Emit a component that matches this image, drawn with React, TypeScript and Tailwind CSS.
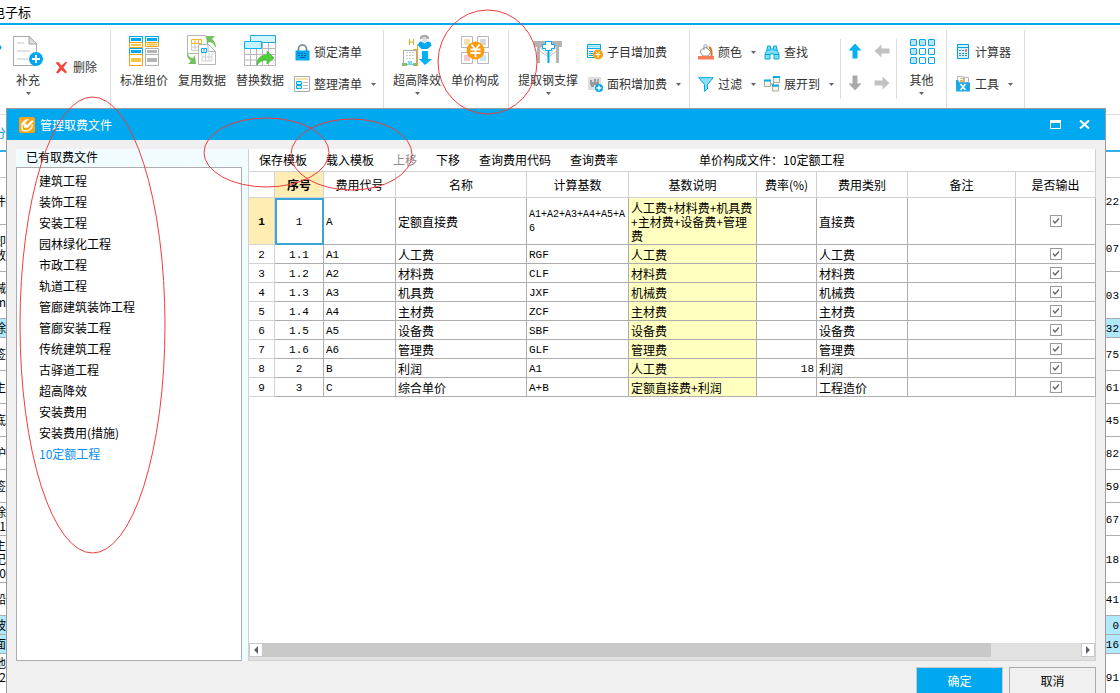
import type { ReactNode } from 'react';

type IconProps = { children: ReactNode; w: number; h: number };

function Svg({ children, w, h }: IconProps) {
  return (
    <svg width={w} height={h} viewBox={`0 0 ${w} ${h}`} fill="none" aria-hidden="true" className="shrink-0">
      {children}
    </svg>
  );
}

function Caret() {
  return (
    <Svg w={5} h={3}>
      <path d="M0 0h5L2.5 3z" fill="#62626e" />
    </Svg>
  );
}

/* ---------- ribbon icons ---------- */

const SupplementIcon = () => (
  <Svg w={30} h={32}>
    <path d="M.5 2.5h16l7 7v22H.5z" fill="#fff" stroke="#a9a9a9" />
    <path d="M16 2.5v7.5h8z" fill="#ddd" stroke="#a9a9a9" />
    <path d="M4 9h7M4 17h13M4 25h11" stroke="#e2e2e2" strokeWidth="2" />
    <circle cx="23" cy="25" r="7" fill="#00a8f0" />
    <path d="M23 21v8M19 25h8" stroke="#fff" strokeWidth="2" />
  </Svg>
);

const DeleteIcon = () => (
  <Svg w={13} h={13}>
    <path d="M.5 1.500l3-.5L6.500 4.500 11 .5l1 1L8.500 6.500 12 11l-1.500 1.500L6.500 9 3 12.500l-2-1L4.500 6.500z" fill="#f2483c" />
  </Svg>
);

const StandardIcon = () => (
  <Svg w={30} h={32}>
    <path d="M.5 14.500h13v6H.5zM.5 2.500h13v6H.5zM16.500 2.500h13v6h-13z" stroke="#00a8f0" />
    <path d="M2 4h10v3H2zM18 4h10v3H18zM2 16h10v3H2z" fill="#00a8f0" />
    <path d="M.5 8.500h13v5H.5zM.5 20.500h13v11H.5zM16.500 8.500h13v4h-13z" stroke="#f5a31a" />
    <path d="M2 10h10v2H2zM18 9.500h10v2H18zM2 24h10v4H2z" fill="#f9c440" />
    <path d="M16.500 14.500h13v6h-13zM16.500 20.500h13v11h-13z" stroke="#b0b0b0" />
    <path d="M18 16h10v3H18zM18 24h10v4H18z" fill="#b5b5b5" />
  </Svg>
);

const ReuseIcon = () => (
  <Svg w={30} h={32}>
    <path d="M.5 1.500h18l2 4v14H.5z" fill="#fff" stroke="#b5b5b5" />
    <path d="M4.500 9.500v7h10M8 10v6M4 13h10" stroke="#d0d0d0" />
    <path d="M4.500 5.500h10v4h-10zM8 5v5M11.500 5v5" fill="#fff" stroke="#f5b52a" />
    <path d="M11.500 10.500h10l7 7v13h-17z" fill="#fff" stroke="#b5b5b5" />
    <path d="M21 10.500v7h7.500" stroke="#b5b5b5" />
    <path d="M15 17v10h10M18.500 19v8M22 19v8M15 23h10M25 20v7" stroke="#d0d0d0" />
    <path d="M14.500 14.500h5v4h-5zM17 14v5" stroke="#00a8f0" />
    <path d="M19 2h9l-3 3c3 3 4 5 4 9-2-4-4-6-7-6l-2 2zM0 17c1 5 3 7 6 7l2-3 1 9H1l3-3c-4-3-5-6-4-10z" fill="#76bf5f" />
  </Svg>
);

const ReplaceIcon = () => (
  <Svg w={32} h={32}>
    <path d="M.5 14v17.500h31V8M.5 20.500h31M.5 26h31M6.500 15v16M12.500 15v16M18.500 9v22M24.500 9v22M19 14.500h12" stroke="#b8b8b8" />
    <path d="M6.500 1.500h25v7h-25z" fill="#d2f4ff" stroke="#20a8d0" />
    <path d="M.5 7.500h17v7H.5z" fill="#c5f2ff" stroke="#00b4f0" />
    <path d="M13 31c0-7 4-10 10-10v-4l7 7-7 6v-4c-4 0-7 1-10 5z" fill="#4fce38" stroke="#35a828" strokeWidth=".6" />
  </Svg>
);

const LockIcon = () => (
  <Svg w={15} h={17}>
    <path d="M3.500 7V5a4 4 0 0 1 8 0v2" stroke="#74808c" strokeWidth="1.600" />
    <path d="M.5 6.500h14v10H.5z" fill="#00a8f0" />
    <path d="M3 9.500h2m1 0h2m1 0h2M3 11.500h2m1 0h2m1 0h2M5 13.500h5" stroke="#07699b" />
  </Svg>
);

const ArrangeIcon = () => (
  <Svg w={16} h={16}>
    <path d="M.5.5h15v15H.5z" fill="#fff" stroke="#aaa" />
    <path d="M2 3h12" stroke="#f6dfa8" strokeWidth="2" />
    <path d="M2.500 5.500h5v3h-5zM2.500 9.500h5v3h-5z" fill="#c7f0ff" stroke="#00a8f0" />
    <path d="M9 6.500h5M9 9.500h5M9 12.500h5" stroke="#bbb" />
  </Svg>
);

const HeightIcon = () => (
  <Svg w={30} h={32}>
    <path d="M1.500 16.500h13v14h-13z" fill="#fff" stroke="#aaa" />
    <path d="M4 18.500h9M4 21.500h9M4 24.500h9" stroke="#ccc" strokeDasharray="2 1" />
    <path d="M0 32v-3h5v3zM11 32v-3h5v3z" fill="#7ac27a" />
    <path d="M6 27h4v4H6z" fill="#7bd7f5" />
    <path d="M15.500 32V10.500h2M15 15.500h-4" stroke="#f5a31a" />
    <path d="M7.500 5v6M11.500 5v6M8 8h4" stroke="#f5a31a" />
    <path d="M18 3c2-3 7-3 9 0v2h-9z" fill="#aaa" />
    <circle cx="22.500" cy="5.500" r="2.500" fill="#ddd" />
    <path d="M17 8.500c2-2 3-1 5.500 1 2.500-2 3.500-3 6-1l1 3-4 3.500h-6L16 11.500z" fill="#00a8f0" />
    <path d="M20 17h6v8h4l-7 6-6-6h3z" fill="#00b0f5" />
  </Svg>
);

const CompositionIcon = () => (
  <Svg w={30} h={30}>
    <path d="M1.500 1.500h11v11h-11zM17.500 1.500h11v11h-11zM1.500 17.500h11v11h-11zM17.500 17.500h11v11h-11z" fill="#fff" stroke="#b8b8b8" />
    <path d="M4 4h6v6H4z" fill="#f5e2b0" />
    <path d="M20 4h6v6h-6z" fill="#d7d7db" />
    <path d="M4 20h6v6H4z" fill="#f3ccd0" />
    <path d="M20 20h6v6h-6z" fill="#cde6f1" />
    <circle cx="15.500" cy="15.500" r="9" fill="#f99d0c" />
    <path d="M11.500 9.500l4 5 4-5M10.500 14.500h10M10.500 18h10M15.500 14v8" stroke="#fff" strokeWidth="1.800" />
  </Svg>
);

const SteelIcon = () => (
  <Svg w={28} h={32}>
    <path d="M0 7h28v6h-3v16h-3V13H6v16H3V13H0z" fill="#b4b4b4" />
    <path d="M6 13l8.500 8 8-8M6 17l8.500 6 8-6" stroke="#c4c4c4" />
    <path d="M11.500 7.500h6v3h3v4h-3v2h-6v-2h-3v-4h3z" fill="#fff" stroke="#00a8f0" />
    <path d="M14.500 17v12" stroke="#00a8f0" strokeWidth="2" />
  </Svg>
);

const SubItemIcon = () => (
  <Svg w={16} h={16}>
    <path d="M.5.5h13v13H.5z" fill="#fff" stroke="#00a0d8" />
    <path d="M1 2.500h12" stroke="#8fdcf8" strokeWidth="2" />
    <path d="M0 4.500h14M2 7.500h4M2 9.500h4M7 7.500h5M2 11.500h4" stroke="#00a8f0" />
    <circle cx="11" cy="10.500" r="5" fill="#f99d0c" />
    <path d="M9 7.500l2 2.500 2-2.500M8.500 10.500h5M11 10v4" stroke="#fff" />
  </Svg>
);

const AreaIcon = () => (
  <Svg w={16} h={16}>
    <path d="M1 1h13v13H1z" fill="#dedede" />
    <path d="M3 4h2v2h2V3h2v3h3v2h-1v3H9V9H7v2H4V9H3z" fill="#999" />
    <path d="M10 3h2v3h-2z" fill="#aaa" />
    <circle cx="12" cy="12" r="4" fill="#00a8f0" />
    <path d="M12 9.500v5M9.500 12h5" stroke="#fff" strokeWidth="1.400" />
  </Svg>
);

const ColorIcon = () => (
  <Svg w={16} h={16}>
    <path d="M3 6l5-3 5 5-3 4H5L2 8z" fill="#fff" stroke="#929292" />
    <path d="M6 6V2c0-2 3-2 3 0v3" stroke="#929292" />
    <path d="M11 3c2 1 3 4 2.500 9" stroke="#d77b21" strokeWidth="2" />
    <path d="M0 12h16v3.500H0z" fill="#fb7d58" />
  </Svg>
);

const FilterIcon = () => (
  <Svg w={16} h={15}>
    <path d="M.7.700h14.500L9.500 7.500v4.500l-3 2.300V7.500z" fill="#90dff8" stroke="#00a8e0" />
  </Svg>
);

const FindIcon = () => (
  <Svg w={16} h={15}>
    <path d="M3.500 1h3v3h3V1h3l.5 4 2 4v5h-5V9h-4v5H1V9l2-4z" fill="#7fdcf6" stroke="#00a8e0" />
    <path d="M3 5h3.500M9.500 5H13M1 9.500h5M10 9.500h5" stroke="#00a8e0" />
  </Svg>
);

const ExpandIcon = () => (
  <Svg w={16} h={16}>
    <path d="M6 8h3M9.500 3v10M10 3.500h-1" stroke="#888" />
    <path d="M.5 4.500h6v6h-6zM9.500 1.500h6v5h-6zM8.500 10h6v5h-6z" fill="#f3f3f0" stroke="#b0a898" />
    <path d="M0 4.500h7M9 1h7M8 9.500h7" stroke="#00b0e8" strokeWidth="2" />
  </Svg>
);

const GridIcon = () => (
  <Svg w={26} h={28}>
    {[0, 1, 2].map((r) =>
      [0, 1, 2].map((c) => (
        <rect
          key={`${r}-${c}`}
          x={1.5 + c * 9}
          y={3.5 + r * 9}
          width="6"
          height="6"
          rx=".5"
          fill={r === 0 || c === 0 ? '#bde2f6' : '#fff'}
          stroke="#00a8e8"
        />
      )),
    )}
  </Svg>
);

const CalculatorIcon = () => (
  <Svg w={14} h={16}>
    <path d="M1.500.5h11v14h-11z" fill="#d6f1fa" stroke="#00a0d8" />
    <path d="M1 3.500h12" stroke="#00a8e0" />
    <path d="M3 6.500h5M3 9.500h8M3 11.500h8" stroke="#3a8fb0" strokeDasharray="2 1" />
    <path d="M9 5.500h2v2H9z" fill="#ef5350" />
  </Svg>
);

const ToolsIcon = () => (
  <Svg w={14} h={16}>
    <path d="M1.500.5h6v6h-6zM8.500 1.500h4v5h-4z" fill="#fff" stroke="#b5b5b5" />
    <path d="M4 2h3v1H4zM4 4h3v2H4z" fill="#f5b52a" />
    <path d="M0 4h2l1.500 2.500H14v9H0z" fill="#1ea8e6" />
    <path d="M4.500 8l5 6M9.500 8l-5 6" stroke="#fff" strokeWidth="1.500" />
  </Svg>
);

const arrowTurns = {
  up: 0,
  right: 90,
  down: 180,
  left: 270,
};

function ArrowIcon({ dir, color }: { dir: keyof typeof arrowTurns; color: string }) {
  return (
    <Svg w={16} h={16}>
      <path d="M8 .5l6.500 7H10.500v8h-5v-8H1.500z" fill={color} transform={`rotate(${arrowTurns[dir]} 8 8)`} />
    </Svg>
  );
}

/* ---------- ribbon building blocks ---------- */

function BigButton({ icon, label, caret = false }: { icon: ReactNode; label: string; caret?: boolean }) {
  return (
    <button type="button" className="flex shrink-0 flex-col items-center pt-[9px]">
      <span className="flex h-8 items-center">{icon}</span>
      <span className="mt-1.5 h-4 leading-4">{label}</span>
      {caret && (
        <span className="mt-1 flex">
          <Caret />
        </span>
      )}
    </button>
  );
}

function SmallButton({ icon, label, caret = false }: { icon: ReactNode; label: string; caret?: boolean }) {
  return (
    <button type="button" className="flex h-8 w-full items-center">
      <span className="mr-1 flex w-4 justify-center">{icon}</span>
      <span>{label}</span>
      {caret && (
        <span className="ml-auto flex">
          <Caret />
        </span>
      )}
    </button>
  );
}

function Divider({ short = false }: { short?: boolean }) {
  return <div className={short ? 'mt-[14px] h-[60px] w-px shrink-0 bg-[#dcdcdc]' : 'mt-[5px] w-px shrink-0 bg-[#dcdcdc]'} />;
}

function Ribbon() {
  return (
    <div className="flex h-[90px] shrink-0 overflow-hidden border-b border-[#dcdcdc] bg-white whitespace-nowrap text-[#333]">
      <div className="flex w-[110px] shrink-0 items-start">
        <span className="flex w-[13px] pt-5">
          <Svg w={2} h={5}>
            <circle cx="-1" cy="2.500" r="2.500" fill="#00a8f0" />
          </Svg>
        </span>
        <BigButton icon={<SupplementIcon />} label="补充" caret />
        <button type="button" className="mt-[26px] ml-3 flex h-8 items-center gap-[5px]">
          <DeleteIcon />
          删除
        </button>
      </div>
      <Divider />
      <div className="flex w-[272px] shrink-0 items-start gap-[10px] pl-[9px]">
        <BigButton icon={<StandardIcon />} label="标准组价" />
        <BigButton icon={<ReuseIcon />} label="复用数据" />
        <BigButton icon={<ReplaceIcon />} label="替换数据" />
        <div className="w-[82px] pt-[11px]">
          <SmallButton icon={<LockIcon />} label="锁定清单" />
          <SmallButton icon={<ArrangeIcon />} label="整理清单" caret />
        </div>
      </div>
      <Divider />
      <div className="flex w-[124px] shrink-0 items-start gap-[10px] pl-[9px]">
        <BigButton icon={<HeightIcon />} label="超高降效" caret />
        <BigButton icon={<CompositionIcon />} label="单价构成" />
      </div>
      <Divider />
      <div className="flex w-[180px] shrink-0 items-start gap-[9px] pl-[9px]">
        <BigButton icon={<SteelIcon />} label="提取钢支撑" caret />
        <div className="w-[94px] pt-[11px]">
          <SmallButton icon={<SubItemIcon />} label="子目增加费" />
          <SmallButton icon={<AreaIcon />} label="面积增加费" caret />
        </div>
      </div>
      <Divider />
      <div className="flex w-[150px] shrink-0 items-start gap-2 pl-2">
        <div className="w-[58px] pt-[11px]">
          <SmallButton icon={<ColorIcon />} label="颜色" caret />
          <SmallButton icon={<FilterIcon />} label="过滤" caret />
        </div>
        <div className="w-[70px] pt-[11px]">
          <SmallButton icon={<FindIcon />} label="查找" />
          <SmallButton icon={<ExpandIcon />} label="展开到" caret />
        </div>
      </div>
      <Divider short />
      <div className="grid w-[55px] shrink-0 auto-rows-[32px] grid-cols-2 content-start justify-items-center pt-[10px]">
        <button type="button" aria-label="上移一行">
          <ArrowIcon dir="up" color="#00b0f5" />
        </button>
        <button type="button" aria-label="升级">
          <ArrowIcon dir="left" color="#c2c2c2" />
        </button>
        <button type="button" aria-label="下移一行">
          <ArrowIcon dir="down" color="#aaaaaa" />
        </button>
        <button type="button" aria-label="降级">
          <ArrowIcon dir="right" color="#c2c2c2" />
        </button>
      </div>
      <Divider short />
      <div className="flex w-[49px] shrink-0 items-start justify-center">
        <BigButton icon={<GridIcon />} label="其他" caret />
      </div>
      <Divider />
      <div className="w-[77px] shrink-0 pt-[11px] pr-[11px] pl-2">
        <SmallButton icon={<CalculatorIcon />} label="计算器" />
        <SmallButton icon={<ToolsIcon />} label="工具" caret />
      </div>
      <Divider />
    </div>
  );
}

/* ---------- sheet behind the dialog ---------- */

type SheetRow = { left: string[]; right: string; size: 'one' | 'two' | 'three'; active?: boolean };

const sheetRows: SheetRow[] = [
  { left: ['件'], right: '22', size: 'three' },
  { left: ['即', '数'], right: '07', size: 'three' },
  { left: ['械', 'cm'], right: '03', size: 'three' },
  { left: ['除'], right: '32', size: 'one', active: true },
  { left: ['签'], right: '75', size: 'two' },
  { left: ['主'], right: '61', size: 'two' },
  { left: ['底'], right: '45', size: 'two' },
  { left: ['护'], right: '82', size: 'two' },
  { left: ['签'], right: '59', size: 'two' },
  { left: ['除', '01'], right: '67', size: 'two' },
  { left: ['主', '记', '0'], right: '18', size: 'three' },
  { left: ['船'], right: '41', size: 'two' },
  { left: ['坡'], right: '0', size: 'one', active: true },
  { left: ['面'], right: '16', size: 'one', active: true },
  { left: ['地', '2', '。'], right: '91', size: 'three' },
];

const sheetHeights = { one: 'h-[19px]', two: 'h-[33px]', three: 'h-[47px]' };

const mono = "font-['Liberation_Mono','Noto_Sans_CJK_SC',monospace] text-[11px]";
const monoSmall = "font-['Liberation_Mono','Noto_Sans_CJK_SC',monospace] text-[10px]";

function Sheet() {
  return (
    <div className="min-h-0 flex-1 overflow-hidden bg-white">
      <div className="flex h-[37px] items-center border-b-2 border-[#2fb0e6] text-[#0a9ae0]">
        <span className="flex w-1.5 justify-end overflow-hidden">分</span>
      </div>
      <div className="h-[26px] border-b border-[#c8c8c8]" />
      {sheetRows.map((row, i) => (
        <div
          key={i}
          className={`flex items-center justify-between border-b border-[#adadad] leading-[14px] ${sheetHeights[row.size]} ${
            row.active ? 'bg-[#b0e8fc]' : 'bg-white'
          }`}
        >
          <div className="w-1.5 overflow-hidden">
            {row.left.map((line, n) => (
              <div key={n} className="flex justify-end">
                {line}
              </div>
            ))}
          </div>
          <div className={`pt-0.5 pr-px ${mono}`}>{row.right}</div>
        </div>
      ))}
    </div>
  );
}

/* ---------- dialog ---------- */

const feeFiles = [
  '建筑工程',
  '装饰工程',
  '安装工程',
  '园林绿化工程',
  '市政工程',
  '轨道工程',
  '管廊建筑装饰工程',
  '管廊安装工程',
  '传统建筑工程',
  '古驿道工程',
  '超高降效',
  '安装费用',
  '安装费用(措施)',
  '10定额工程',
];

type Fee = { no: string; code: string; name: string; base: string; note: string; rate?: string; kind: string };

const fees: Fee[] = [
  {
    no: '1',
    code: 'A',
    name: '定额直接费',
    base: 'A1+A2+A3+A4+A5+A6',
    note: '人工费+材料费+机具费+主材费+设备费+管理费',
    kind: '直接费',
  },
  { no: '1.1', code: 'A1', name: '人工费', base: 'RGF', note: '人工费', kind: '人工费' },
  { no: '1.2', code: 'A2', name: '材料费', base: 'CLF', note: '材料费', kind: '材料费' },
  { no: '1.3', code: 'A3', name: '机具费', base: 'JXF', note: '机械费', kind: '机械费' },
  { no: '1.4', code: 'A4', name: '主材费', base: 'ZCF', note: '主材费', kind: '主材费' },
  { no: '1.5', code: 'A5', name: '设备费', base: 'SBF', note: '设备费', kind: '设备费' },
  { no: '1.6', code: 'A6', name: '管理费', base: 'GLF', note: '管理费', kind: '管理费' },
  { no: '2', code: 'B', name: '利润', base: 'A1', note: '人工费', rate: '18', kind: '利润' },
  { no: '3', code: 'C', name: '综合单价', base: 'A+B', note: '定额直接费+利润', kind: '工程造价' },
];

const columns = [
  { label: '', width: 'w-[26px]' },
  { label: '序号', width: 'w-[49px]' },
  { label: '费用代号', width: 'w-[72px]' },
  { label: '名称', width: 'w-[131px]' },
  { label: '计算基数', width: 'w-[102px]' },
  { label: '基数说明', width: 'w-[128px]' },
  { label: '费率(%)', width: 'w-[60px]' },
  { label: '费用类别', width: 'w-[91px]' },
  { label: '备注', width: '' },
  { label: '是否输出', width: 'w-[80px]' },
];

const frame = 'border-r border-b border-[#adadad]';
const cell = `${frame} px-0.5 pt-0.5`;

function OutputCheck({ label }: { label: string }) {
  return (
    <label className="relative mx-auto flex size-3">
      <input type="checkbox" defaultChecked aria-label={label} className="peer size-3 appearance-none border border-[#9a9a9a] bg-white" />
      <svg viewBox="0 0 12 12" fill="none" className="pointer-events-none absolute inset-0 hidden peer-checked:block" aria-hidden="true">
        <path d="M3 5.500l2 2.500 4-4.500" stroke="#62626e" strokeWidth="1.300" />
      </svg>
    </label>
  );
}

function FeeTable() {
  return (
    <table className="w-full table-fixed border-separate border-spacing-0 leading-[14px]">
      <thead>
        <tr className="h-[27px]">
          {columns.map((c, i) => (
            <th
              key={i}
              scope="col"
              className={`border-t border-r border-b border-[#d2d2d2] ${c.width} ${
                i === 1 ? 'bg-[#ffedb3] font-bold' : 'font-normal'
              }`}
            >
              {c.label}
            </th>
          ))}
        </tr>
      </thead>
      <tbody>
        {fees.map((f, i) => (
          <tr key={f.no} className={i === 0 ? 'h-[47px]' : 'h-[19px]'}>
            <th
              scope="row"
              className={`border-r border-b border-[#d2d2d2] pt-0.5 ${mono} ${
                i === 0 ? 'bg-[#ffedb3] font-bold' : 'font-normal'
              }`}
            >
              {i + 1}
            </th>
            <td
              className={`${cell} ${mono} text-center ${
                i === 0 ? 'relative z-10 outline-2 -outline-offset-2 outline-[#3ba5d8]' : ''
              }`}
            >
              {f.no}
            </td>
            <td className={`${cell} ${mono}`}>{f.code}</td>
            <td className={cell}>{f.name}</td>
            <td className={`${cell} ${f.base.length > 14 ? monoSmall : mono} break-all`}>{f.base}</td>
            <td className={`${cell} bg-[#ffffc0] break-all`}>{f.note}</td>
            <td className={`${cell} ${mono} text-right`}>{f.rate}</td>
            <td className={cell}>{f.kind}</td>
            <td className={cell} />
            <td className={frame}>
              <OutputCheck label={`${f.name} 是否输出`} />
            </td>
          </tr>
        ))}
      </tbody>
    </table>
  );
}

function ScrollBar() {
  return (
    <div className="flex h-[17px] items-start bg-[#e1e1e1]">
      <button type="button" aria-label="向左滚动" className="flex size-[14px] items-center justify-center border border-[#c8c8c8] bg-white">
        <Svg w={4} h={8}>
          <path d="M4 0v8L0 4z" fill="#62626e" />
        </Svg>
      </button>
      <div className="flex h-[14px] flex-1">
        <div className="w-[89%] bg-[#c9c9c9]" />
      </div>
      <button type="button" aria-label="向右滚动" className="flex size-[14px] items-center justify-center border border-[#c8c8c8] bg-white">
        <Svg w={4} h={8}>
          <path d="M0 0v8l4-4z" fill="#62626e" />
        </Svg>
      </button>
    </div>
  );
}

function FeeDialog() {
  return (
    <section
      role="dialog"
      aria-labelledby="dialog-title"
      className="absolute top-[108px] right-[14px] bottom-0 left-1.5 flex flex-col overflow-hidden border-x border-t border-[#9b9b9b] bg-[#f0f0f0]"
    >
      <header className="flex h-[31px] shrink-0 items-center bg-[#00a8f0] pr-[15px] pl-3 text-white">
        <Svg w={16} h={16}>
          <rect width="16" height="16" rx="2" fill="#f9a51a" />
          <path d="M3 6c2-3 4-4 7-4l-4 4 2 2 5-5 1.500 1.500L9 10.500 5.500 11l-1-3z" fill="#fff" />
          <path d="M3 6v5c0 2 1 3 3 3 4 0 7-2 7.500-6.500" stroke="#fff3d6" strokeWidth="1.600" />
        </Svg>
        <h1 id="dialog-title" className="ml-[5px] flex-1">
          管理取费文件
        </h1>
        <button type="button" aria-label="最大化" className="mr-[18px] flex">
          <Svg w={11} h={9}>
            <path d="M.5.5h10v8H.5z" stroke="#fff" />
            <path d="M0 1.500h11" stroke="#fff" strokeWidth="3" />
          </Svg>
        </button>
        <button type="button" aria-label="关闭" className="flex">
          <Svg w={11} h={9}>
            <path d="M1 .5l9 8M10 .5l-9 8" stroke="#fff" strokeWidth="2" />
          </Svg>
        </button>
      </header>

      <div className="flex min-h-0 flex-1 pt-[9px] pr-[9px] pl-[9px]">
        <aside className="flex w-[232px] shrink-0 flex-col bg-[#f0fcff] pr-[6px]">
          <h2 className="h-[18px] pl-[10px] leading-4">已有取费文件</h2>
          <ul className="min-h-0 flex-1 border border-[#adadad] bg-white pt-0.5 pl-[22px]">
            {feeFiles.map((name) => (
              <li key={name} className="flex h-[21px] items-center">
                <button type="button" className={name === '10定额工程' ? 'text-[#0a8ff0]' : ''}>
                  {name}
                </button>
              </li>
            ))}
          </ul>
        </aside>
        <div className="flex min-w-0 flex-1 flex-col border-x border-b border-[#d2d2d2] bg-white">
          <div className="flex h-[22px] shrink-0 items-center gap-[19px] pl-[10px] whitespace-nowrap">
            <button type="button">保存模板</button>
            <button type="button">载入模板</button>
            <button type="button" disabled className="text-[#8c8c8c]">
              上移
            </button>
            <button type="button">下移</button>
            <button type="button">查询费用代码</button>
            <button type="button">查询费率</button>
            <span className="ml-[62px]">单价构成文件：10定额工程</span>
          </div>
          <div className="-mr-px min-h-0 flex-1">
            <FeeTable />
          </div>
          <ScrollBar />
        </div>
      </div>

      <footer className="flex h-8 shrink-0 items-start justify-end gap-1.5 pt-1.5 pr-[9px]">
        <button type="button" className="h-7 w-[87px] shrink-0 border border-[#c8c8c8] bg-[#00a8f0] text-white">
          确定
        </button>
        <button type="button" className="h-7 w-[87px] shrink-0 border border-[#adadad] bg-[#f0f0f0]">
          取消
        </button>
      </footer>
    </section>
  );
}

/* Hand-drawn style rings that point at parts of the window. */
function Rings() {
  return (
    <svg
      width="560"
      height="560"
      viewBox="0 0 560 560"
      fill="none"
      stroke="#f23c3c"
      className="pointer-events-none absolute top-0 left-0 z-20"
      aria-hidden="true"
    >
      <ellipse cx="92.500" cy="325" rx="72.500" ry="228" />
      <ellipse cx="266.500" cy="152.500" rx="62.500" ry="34.500" />
      <ellipse cx="351.500" cy="154.500" rx="60.500" ry="35.500" />
      <ellipse cx="487.500" cy="62" rx="49.500" ry="52" />
    </svg>
  );
}

export default function App() {
  return (
    <main className="relative flex h-screen flex-col overflow-hidden bg-white font-['Noto_Sans_CJK_SC',sans-serif] text-[12px] leading-4 text-black">
      <div className="flex h-[25px] shrink-0 items-center overflow-hidden border-b-2 border-[#00a8f0] text-[13px]">
        <span className="-ml-2">电子标</span>
      </div>
      <Ribbon />
      <Sheet />
      <FeeDialog />
      <Rings />
    </main>
  );
}
